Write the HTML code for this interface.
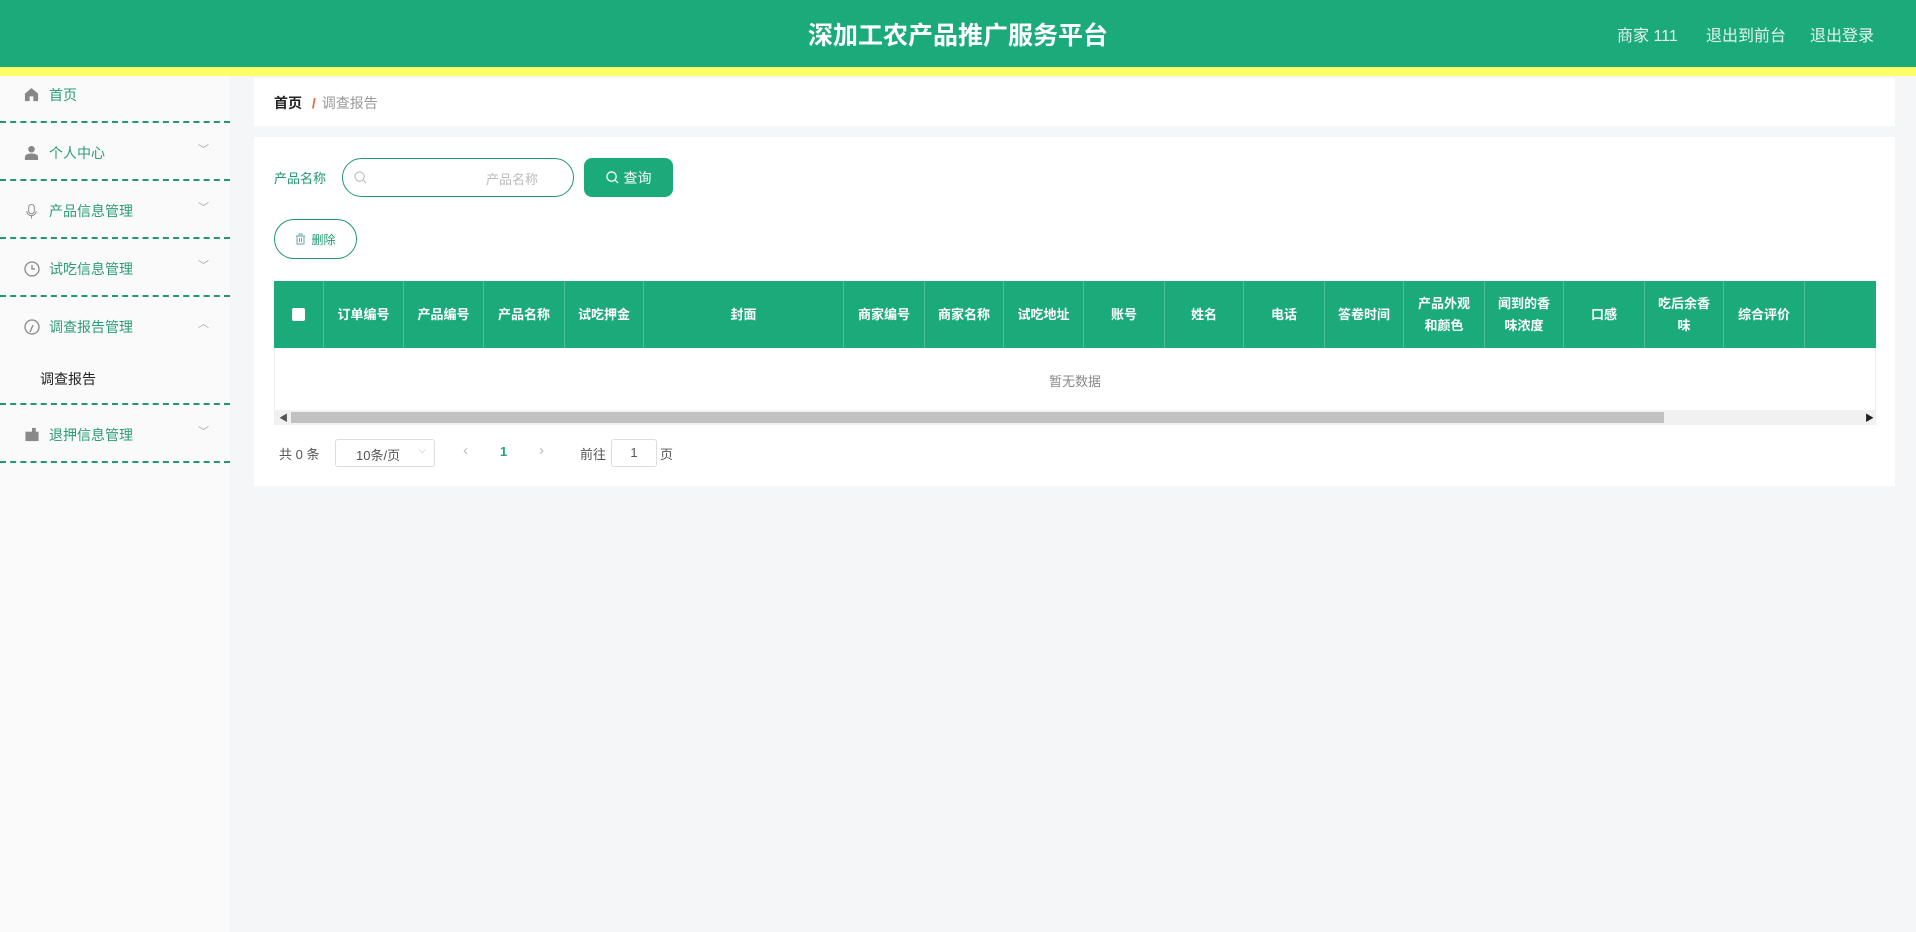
<!DOCTYPE html>
<html><head><meta charset="utf-8"><style>
*{margin:0;padding:0;box-sizing:border-box}
body{width:1916px;height:932px;overflow:hidden;background:#f5f6f8;font-family:"Liberation Sans","Noto Sans CJK SC",sans-serif;position:relative}
.hdr{position:absolute;left:0;top:0;width:1916px;height:67px;background:#1bab7a}
.yl{position:absolute;left:0;top:67px;width:1916px;height:9px;background:#ffff66}
.title{position:absolute;left:0;width:1916px;top:16px;text-align:center;color:#fff;font-size:25px;font-weight:bold}
.rt{position:absolute;top:22px;color:#e4f4ee;font-size:16px}
.side{position:absolute;left:0;top:76px;width:230px;height:856px;background:#fafafa}
.mi{position:absolute;left:0;width:230px;font-size:14px;color:#2a9d74}
.mi .t{position:absolute;left:49px}
.mi .ic{position:absolute;left:24px;top:2px}
.mi .ar{position:absolute;left:198px;top:-2px;color:#aaa;font-size:11px}
.dl{position:absolute;left:0;width:230px;border-top:2px dashed #1f9a6e}
.card{position:absolute;background:#fff}
.th{position:absolute;top:281px;height:67px;background:#1bab7a;color:#fff;font-size:13px;font-weight:bold;display:flex;align-items:center;justify-content:center;text-align:center;line-height:22px;border-right:1px solid #4dc197}
</style></head><body>
<div class="hdr"><div class="title">深加工农产品推广服务平台</div>
<div class="rt" style="left:1617px">商家 111</div><div class="rt" style="left:1706px">退出到前台</div><div class="rt" style="left:1810px">退出登录</div></div>
<div class="yl"></div>
<div class="side">
<div class="mi" style="top:9px"><svg class="ic" width="15" height="15" viewBox="0 0 16 16"><path d="M8 1L1 7v8h5v-5h4v5h5V7z" fill="#888"/></svg><span class="t">首页</span></div>
<div class="dl" style="top:45px"></div>
<div class="mi" style="top:67px"><svg class="ic" width="15" height="15" viewBox="0 0 16 16"><circle cx="8" cy="4.5" r="3.5" fill="#888"/><path d="M1 16v-3c0-3 3-4 7-4s7 1 7 4v3z" fill="#888"/></svg><span class="t">个人中心</span><span class="ar">﹀</span></div>
<div class="dl" style="top:103px"></div>
<div class="mi" style="top:125px"><svg class="ic" width="15" height="16" viewBox="0 0 16 16"><rect x="5" y="1" width="6" height="10" rx="3" fill="none" stroke="#888"/><path d="M3 8a5 5 0 0 0 10 0M8 13v3" fill="none" stroke="#888"/></svg><span class="t">产品信息管理</span><span class="ar">﹀</span></div>
<div class="dl" style="top:161px"></div>
<div class="mi" style="top:183px"><svg class="ic" width="16" height="16" viewBox="0 0 16 16"><circle cx="8" cy="8" r="7" fill="none" stroke="#888" stroke-width="1.3"/><path d="M8 4v4h3" fill="none" stroke="#888" stroke-width="1.3"/></svg><span class="t">试吃信息管理</span><span class="ar">﹀</span></div>
<div class="dl" style="top:219px"></div>
<div class="mi" style="top:241px"><svg class="ic" width="16" height="16" viewBox="0 0 16 16"><circle cx="8" cy="8" r="7" fill="none" stroke="#888" stroke-width="1.3"/><path d="M6 13l3-7" stroke="#888" stroke-width="1.3"/></svg><span class="t">调查报告管理</span><span class="ar">︿</span></div>
<div class="mi" style="top:293px;color:#222"><span class="t" style="left:40px">调查报告</span></div>
<div class="dl" style="top:327px"></div>
<div class="mi" style="top:349px"><svg class="ic" width="16" height="15" viewBox="0 0 16 16"><rect x="1" y="5" width="14" height="10" fill="#888"/><rect x="8" y="1" width="4" height="5" fill="#888"/></svg><span class="t">退押信息管理</span><span class="ar">﹀</span></div>
<div class="dl" style="top:385px"></div>
</div>
<div class="card" style="left:254px;top:78px;width:1641px;height:48px">
<div style="position:absolute;left:20px;top:15px;font-size:14px;color:#222;font-weight:bold">首页 <span style="color:#e0643c;margin:0 6px">/</span><span style="color:#999;font-weight:normal">调查报告</span></div></div>
<div class="card" style="left:254px;top:137px;width:1641px;height:349px"></div>
<div style="position:absolute;left:274px;top:168px;font-size:13px;color:#1f9a6e">产品名称</div>
<div style="position:absolute;left:342px;top:158px;width:232px;height:39px;border:1px solid #1f9a6e;border-radius:20px;background:#fff">
<svg style="position:absolute;left:11px;top:12px" width="13" height="13" viewBox="0 0 14 14"><circle cx="6" cy="6" r="5" fill="none" stroke="#bbb" stroke-width="1.2"/><path d="M10 10l3 3" stroke="#bbb" stroke-width="1.2"/></svg>
<span style="position:absolute;left:143px;top:10px;font-size:13px;color:#bbb">产品名称</span></div>
<div style="position:absolute;left:584px;top:158px;width:89px;height:39px;background:#1bab7a;border-radius:8px;color:#fff;font-size:14px;display:flex;align-items:center;justify-content:center">
<svg width="13" height="13" viewBox="0 0 14 14" style="margin-right:5px"><circle cx="6" cy="6" r="5" fill="none" stroke="#fff" stroke-width="1.4"/><path d="M10 10l3 3" stroke="#fff" stroke-width="1.4"/></svg>查询</div>
<div style="position:absolute;left:274px;top:219px;width:83px;height:40px;border:1px solid #1f9a6e;border-radius:20px;color:#1f9a6e;font-size:12px;display:flex;align-items:center;justify-content:center">
<svg width="11" height="12" viewBox="0 0 11 12" style="margin-right:5px"><path d="M1 3h9M4 3V1h3v2M2 3v8h7V3M4.5 5v4M6.5 5v4" fill="none" stroke="#6aa" stroke-width="1"/></svg>删除</div>
<div style="position:absolute;left:274px;top:281px;width:1602px;height:144px;border:1px solid #eee;background:#fff"></div>
<div class="th" style="left:274px;width:50px"><span style="display:block;width:13px;height:13px;background:#fff;border-radius:2px"></span></div>
<div class="th" style="left:324px;width:80px">订单编号</div>
<div class="th" style="left:404px;width:80px">产品编号</div>
<div class="th" style="left:484px;width:81px">产品名称</div>
<div class="th" style="left:565px;width:79px">试吃押金</div>
<div class="th" style="left:644px;width:200px">封面</div>
<div class="th" style="left:844px;width:81px">商家编号</div>
<div class="th" style="left:925px;width:79px">商家名称</div>
<div class="th" style="left:1004px;width:80px">试吃地址</div>
<div class="th" style="left:1084px;width:81px">账号</div>
<div class="th" style="left:1165px;width:79px">姓名</div>
<div class="th" style="left:1244px;width:81px">电话</div>
<div class="th" style="left:1325px;width:79px">答卷时间</div>
<div class="th" style="left:1404px;width:81px">产品外观<br>和颜色</div>
<div class="th" style="left:1485px;width:79px">闻到的香<br>味浓度</div>
<div class="th" style="left:1564px;width:81px">口感</div>
<div class="th" style="left:1645px;width:79px">吃后余香<br>味</div>
<div class="th" style="left:1724px;width:81px">综合评价</div>
<div class="th" style="left:1805px;width:71px;border-right:none"></div>
<div style="position:absolute;left:274px;top:371px;width:1602px;text-align:center;font-size:13px;color:#888">暂无数据</div>
<div style="position:absolute;left:275px;top:410px;width:1600px;height:15px;background:#f1f1f1"></div>
<div style="position:absolute;left:291px;top:412px;width:1373px;height:11px;background:#c1c1c1"></div>
<div style="position:absolute;left:279px;top:411px;font-size:9px;color:#555">◀</div>
<div style="position:absolute;left:1865px;top:411px;font-size:9px;color:#222">▶</div>
<div style="position:absolute;left:279px;top:444px;font-size:13px;color:#555">共 0 条</div>
<div style="position:absolute;left:335px;top:439px;width:100px;height:28px;border:1px solid #ddd;border-radius:3px;font-size:13px;color:#555;padding:5px 0 0 20px">10条/页<span style="position:absolute;right:8px;top:5px;color:#bbb;font-size:10px">⌵</span></div>
<div style="position:absolute;left:463px;top:442px;font-size:15px;color:#bbb">‹</div>
<div style="position:absolute;left:500px;top:444px;font-size:13px;color:#1bab7a;font-weight:bold">1</div>
<div style="position:absolute;left:539px;top:442px;font-size:15px;color:#bbb">›</div>
<div style="position:absolute;left:580px;top:444px;font-size:13px;color:#555">前往</div>
<div style="position:absolute;left:611px;top:439px;width:46px;height:28px;border:1px solid #ddd;border-radius:3px;font-size:13px;color:#555;text-align:center;padding-top:5px">1</div>
<div style="position:absolute;left:660px;top:444px;font-size:13px;color:#555">页</div>
</body></html>
